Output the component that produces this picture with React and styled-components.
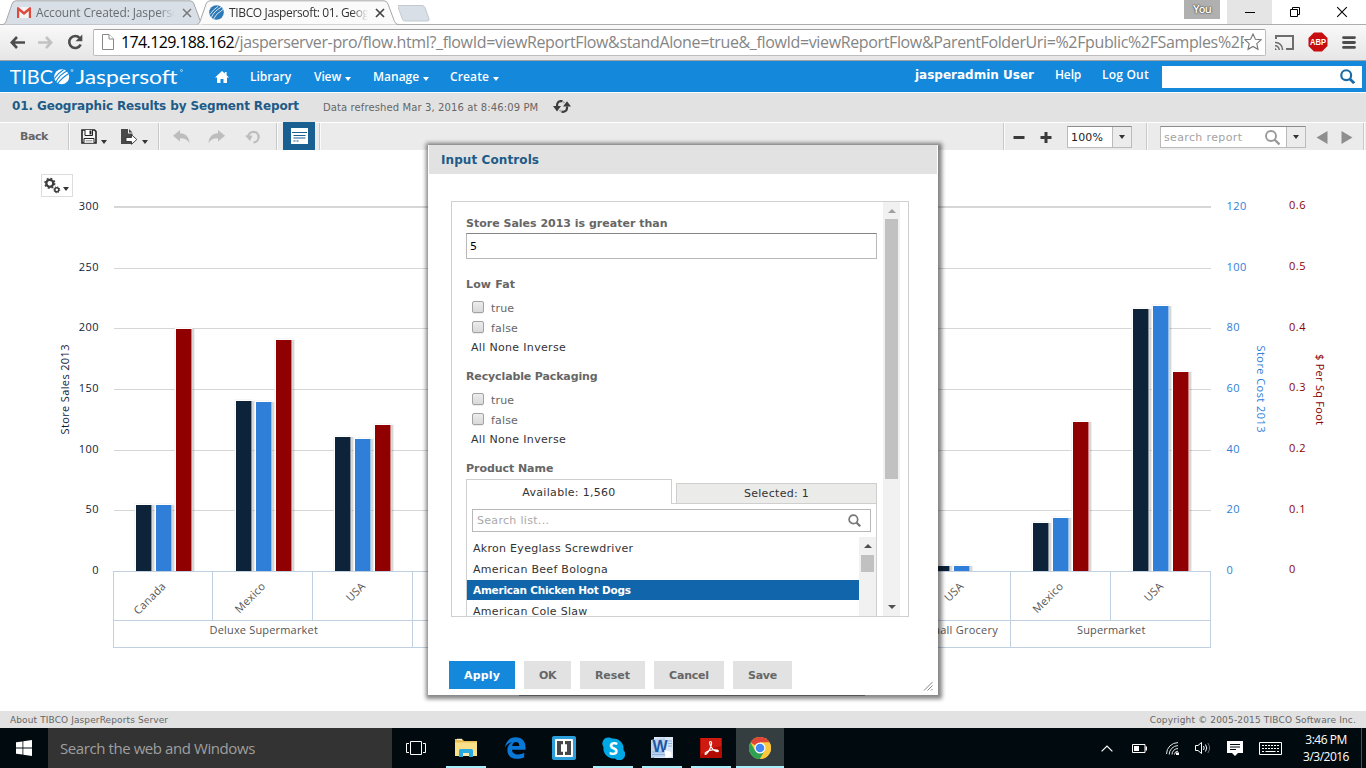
import React from 'react';
import styled, { createGlobalStyle, css } from 'styled-components';

const VERDANA = '"DejaVu Sans", Verdana, sans-serif';
const SEGOE = '"Open Sans", "Segoe UI", sans-serif';

const GlobalStyle = createGlobalStyle`
  *, *::before, *::after { box-sizing: border-box; }
  body { margin: 0; background: #fff; overflow: hidden; }
  svg { display: block; flex: none; }
`;

const Screen = styled.div`
  position: relative;
  width: 1366px;
  height: 768px;
  display: flex;
  flex-direction: column;
  overflow: hidden;
  font-family: ${VERDANA};
  font-size: 11px;
  white-space: nowrap;
  background: #fff;
`;

/* ---------- browser window ---------- */

const TabStrip = styled.div`
  display: flex;
  height: 25px;
  flex: none;
  border-bottom: 1px solid #adadad;
  font-family: ${SEGOE};
  font-size: 12px;
`;

const BrowserTab = styled.div`
  position: relative;
  display: flex;
  align-items: center;
  width: 201px;
  height: 25px;
  margin-left: ${(p) => (p.$active ? -7 : 3)}px;
  padding: 0 0 0 ${(p) => (p.$active ? 12 : 14)}px;
  color: ${(p) => (p.$active ? '#333' : '#6a6d70')};
  letter-spacing: ${(p) => (p.$active ? -0.36 : -0.13)}px;
  z-index: ${(p) => (p.$active ? 2 : 1)};
`;

const TabShape = styled.svg`
  position: absolute;
  left: 0;
  top: 0;
  z-index: -1;
`;

const TabTitle = styled.span`
  width: 139px;
  margin-left: ${(p) => p.$gap}px;
  margin-right: ${(p) => p.$after}px;
  overflow: hidden;
  line-height: 22px;
  mask-image: linear-gradient(to right, #000 88%, transparent 100%);
`;

const WindowControls = styled.div`
  display: flex;
  align-items: flex-start;
  margin-left: auto;
`;

const ProfileBadge = styled.div`
  width: 36px;
  height: 19px;
  margin-right: 7px;
  background: #b0b0b0;
  color: #fff;
  font-size: 11px;
  font-weight: 600;
  line-height: 18px;
  text-align: center;
  letter-spacing: -0.8px;
  text-shadow: 0 0 2px #333, 0 0 1px #444;
`;

const WindowButton = styled.div`
  display: grid;
  place-items: center;
  width: ${(p) => p.$w}px;
  height: 24px;
  background: ${(p) => (p.$hover ? '#e5e5e5' : 'transparent')};
`;

const AddressRow = styled.div`
  display: flex;
  align-items: center;
  height: 36px;
  flex: none;
  padding: 0 10px 1px;
  border-bottom: 1px solid #a2a2a2;
  background: linear-gradient(#f9f9f9, #e6e6e6);
`;

const NavIcons = styled.div`
  display: flex;
  align-items: center;
  gap: 13px;
  width: 84px;
`;

const AddressBox = styled.div`
  display: flex;
  align-items: center;
  width: 1173px;
  height: 27px;
  padding: 0 3px 0 7px;
  border: 1px solid #bdbdbd;
  border-top-color: #a0a0a0;
  border-radius: 2px;
  background: #fff;
  font-family: ${SEGOE};
  font-size: 16px;
  color: #858585;
`;

const Host = styled.span`
  margin-left: 7px;
  color: #000;
  letter-spacing: -0.63px;
`;

const Path = styled.span`
  flex: 1;
  overflow: hidden;
  letter-spacing: -0.365px;
`;

const ExtensionIcons = styled.div`
  display: flex;
  align-items: center;
  gap: 14px;
  margin-left: 9px;
`;

/* ---------- application header ---------- */

const Banner = styled.header`
  display: flex;
  align-items: center;
  height: 31px;
  flex: none;
  padding: 0 4px 0 10px;
  background: #1488da;
  color: #fff;
  font-family: ${SEGOE};
  font-size: 12px;
  font-weight: 600;
`;

const HomeLink = styled.div`
  width: 35px;
  margin-left: 31px;
`;

const NavItem = styled.div`
  display: flex;
  align-items: center;
  width: ${(p) => p.$w}px;
  letter-spacing: ${(p) => p.$track || 0}px;
`;

const Caret = styled.i`
  width: 0;
  height: 0;
  margin: ${(p) => p.$m || '4px 0 0 4px'};
  border: 3px solid transparent;
  border-top: 4px solid currentColor;
  border-bottom: 0;
`;

const UserLinks = styled.div`
  display: flex;
  align-items: baseline;
  margin-left: auto;
  padding-bottom: 4px;
`;

const UserName = styled.b`
  width: 140px;
  font-family: ${VERDANA};
`;

const UserLink = styled.span`
  width: ${(p) => p.$w}px;
  letter-spacing: ${(p) => p.$track}px;
`;

const BannerSearch = styled.div`
  display: flex;
  justify-content: flex-end;
  align-items: center;
  width: 200px;
  height: 22px;
  padding-right: 7px;
  background: #fff;
`;

const TitleBar = styled.div`
  display: flex;
  align-items: center;
  height: 31px;
  flex: none;
  padding-left: 12px;
  border-top: 1px solid #fff;
  border-bottom: 1px solid #fff;
  background: #e2e2e2;
`;

const ReportTitle = styled.h1`
  width: 311px;
  margin: 0;
  padding-bottom: 3px;
  color: #205b87;
  font-size: 12px;
  letter-spacing: -0.125px;
`;

const Refreshed = styled.span`
  width: 230px;
  color: #666;
  font-size: 10px;
  letter-spacing: 0.11px;
`;

const Toolbar = styled.div`
  display: flex;
  height: 27px;
  flex: none;
  background: #ebebeb;
`;

const ToolGroup = styled.div`
  display: flex;
  align-items: center;
  width: ${(p) => p.$w}px;
  padding-left: ${(p) => p.$pl || 0}px;
  gap: ${(p) => p.$gap || 0}px;
  border-right: ${(p) => (p.$last ? '0' : '1px solid #c9c9c9')};
  box-shadow: ${(p) => (p.$last ? 'none' : '1px 0 0 #fafafa')};
`;

const BackLabel = styled.b`
  color: #666;
  letter-spacing: -0.45px;
`;

const MenuTool = styled.div`
  display: flex;
  align-items: center;
  width: 27px;
  color: #333;
`;

const ActiveTool = styled.div`
  display: grid;
  place-items: center;
  width: 32px;
  height: 28px;
  margin-top: -1px;
  background: #1a5f91;
`;

const Spacer = styled.div`
  flex: 1;
`;

const Combo = styled.div`
  display: flex;
  width: ${(p) => p.$w}px;
  height: 22px;
  border: 1px solid #bbb;
  border-top-color: #8c8c8c;
  background: #fff;
  color: ${(p) => p.$color};
  line-height: 22px;
`;

const ComboText = styled.span`
  flex: 1;
  padding-left: 3px;
  letter-spacing: ${(p) => p.$track}px;
`;

const ComboArrow = styled.span`
  display: grid;
  place-items: center;
  width: 19px;
  border-left: 1px solid #bbb;
  background: #ececec;
  color: #333;
`;

const PageArrows = styled.div`
  display: flex;
  gap: 13px;
`;

/* ---------- report and footer ---------- */

const Report = styled.main`
  position: relative;
  height: 561px;
  flex: none;
`;

const ChartMenu = styled.div`
  position: absolute;
  left: 41px;
  top: 24px;
  display: flex;
  align-items: center;
  width: 32px;
  height: 23px;
  padding-left: 2px;
  border: 1px solid #ddd;
  background: #fff;
  color: #333;
`;

const Footer = styled.footer`
  display: flex;
  justify-content: space-between;
  align-items: center;
  height: 17px;
  flex: none;
  padding: 0 10px;
  background: #e2e2e2;
  color: #666;
  font-size: 9px;
`;

const FooterText = styled.span`
  letter-spacing: ${(p) => p.$track}px;
`;

/* ---------- input controls dialog ---------- */

const Dialog = styled.section`
  position: absolute;
  left: 428px;
  top: 145px;
  width: 510px;
  height: 550px;
  padding: 0 1px;
  background: #fff;
  box-shadow: 1px 1px 4px 3px rgba(0, 0, 0, 0.48);
`;

const DialogTitle = styled.h2`
  height: 29px;
  margin: 0;
  padding-left: 12px;
  background: #e2e2e2;
  color: #205b87;
  font-size: 12px;
  line-height: 30px;
  letter-spacing: 0.09px;
`;

const ScrollPanel = styled.div`
  display: flex;
  width: 458px;
  height: 416px;
  margin: 27px 0 0 22px;
  border: 1px solid #d0d0d0;
  overflow: hidden;
`;

const Controls = styled.div`
  width: 431px;
  padding: 14px 6px 0 14px;
  color: #666;
`;

const Control = styled.div`
  height: ${(p) => p.$h}px;
`;

const ControlLabel = styled.div`
  font-weight: 700;
  line-height: 15px;
  letter-spacing: ${(p) => p.$track || 0}px;
`;

const TextInput = styled.div`
  height: 26px;
  margin-top: 2px;
  padding-left: 3px;
  border: 1px solid #b8b8b8;
  border-top-color: #858585;
  color: #000;
  line-height: 26px;
`;

const Choices = styled.div`
  padding: 6px 0 2px 6px;
`;

const Choice = styled.div`
  display: flex;
  align-items: center;
  height: 20px;
  letter-spacing: 0.18px;
`;

const CheckBox = styled.span`
  width: 12px;
  height: 12px;
  margin: -2px 7px 0 0;
  border: 1px solid #a3a3a3;
  border-radius: 2px;
  background: linear-gradient(#ececec, #d9d9d9);
  box-shadow: 0 1px 0 #ececec;
`;

const SelectionLinks = styled.div`
  padding-left: 5px;
  color: #333;
  line-height: 15px;
  letter-spacing: 0.33px;
`;

const PickerTabs = styled.div`
  display: flex;
  align-items: flex-end;
  height: 25px;
  margin-top: 3px;
  color: #333;
  letter-spacing: 0.3px;
  text-align: center;
`;

const PickerTab = styled.div`
  border: 1px solid #cfcfcf;
  ${(p) =>
    p.$active
      ? css`
          width: 206px;
          height: 25px;
          border-bottom: 0;
          line-height: 25px;
        `
      : css`
          width: 201px;
          height: 21px;
          background: #ebebe9;
          line-height: 19px;
        `}
`;

const TabGap = styled.div`
  width: 4px;
  border-bottom: 1px solid #cfcfcf;
`;

const Picker = styled.div`
  height: 140px;
  padding-top: 5px;
  border: 1px solid #cfcfcf;
  border-top: 0;
`;

const ListSearch = styled.div`
  display: flex;
  align-items: center;
  justify-content: space-between;
  height: 23px;
  margin: 0 5px 5px;
  padding: 0 9px 0 4px;
  border: 1px solid #b8b8b8;
  color: #a9a9a9;
  line-height: 22px;
  letter-spacing: 0.31px;
`;

const List = styled.div`
  display: flex;
`;

const Options = styled.div`
  flex: 1;
  padding-top: 1px;
`;

const Option = styled.div`
  height: 20px;
  margin-bottom: 1px;
  padding-left: 6px;
  line-height: 22px;
  color: #333;
  letter-spacing: 0.29px;
  ${(p) =>
    p.$selected &&
    css`
      background: #1065ab;
      color: #fff;
      font-weight: 700;
      font-size: 10.5px;
      line-height: 20px;
      letter-spacing: -0.24px;
    `}
`;

const ScrollTrack = styled.div`
  display: flex;
  flex-direction: column;
  align-items: center;
  width: 17px;
  margin-right: ${(p) => p.$mr || 0}px;
  background: #f1f1f1;
`;

const ScrollArrow = styled.i`
  width: 0;
  height: 0;
  margin: ${(p) => p.$m};
  border: 4px solid transparent;
  ${(p) =>
    p.$down
      ? css`
          border-top-color: ${p.$color};
          border-bottom: 0;
        `
      : css`
          border-bottom-color: ${p.$color};
          border-top: 0;
        `}
`;

const ScrollThumb = styled.div`
  width: 13px;
  height: ${(p) => p.$h}px;
  background: #c1c1c1;
`;

const Actions = styled.div`
  display: flex;
  gap: 9px;
  margin: 44px 0 0 20px;
`;

const Action = styled.div`
  width: ${(p) => p.$w}px;
  height: 28px;
  background: ${(p) => (p.$primary ? '#1488da' : '#e2e2e2')};
  color: ${(p) => (p.$primary ? '#fff' : '#666')};
  font-weight: 700;
  line-height: 29px;
  text-align: center;
  letter-spacing: ${(p) => p.$track}px;
`;

const ResizeGrip = styled.svg`
  position: absolute;
  right: 5px;
  bottom: 4px;
`;

const DialogUnderline = styled.div`
  position: absolute;
  left: 91px;
  bottom: -1px;
  width: 346px;
  height: 1px;
  background: #555;
`;

/* ---------- taskbar ---------- */

const Taskbar = styled.div`
  display: flex;
  height: 40px;
  flex: none;
  background: #010b0f;
  color: #fff;
  font-family: ${SEGOE};
`;

const StartButton = styled.div`
  display: grid;
  place-items: center;
  width: 48px;
`;

const TaskSearch = styled.div`
  width: 344px;
  padding-left: 12px;
  background: #333;
  color: #9f9f9f;
  font-size: 15px;
  line-height: 40px;
  letter-spacing: -0.42px;
`;

const TaskApp = styled.div`
  display: flex;
  flex-direction: column;
  align-items: center;
  justify-content: space-between;
  width: 48px;
  height: 40px;
  margin-right: 1px;
  background: ${(p) => (p.$active ? '#343d40' : 'transparent')};

  &::after {
    content: '';
    width: ${(p) => (p.$active ? 48 : 40)}px;
    height: 2px;
    background: ${(p) => (p.$running ? '#a8effb' : 'transparent')};
  }
`;

const TaskIcon = styled.div`
  display: grid;
  place-items: center;
  height: 38px;
  padding-top: 2px;
`;

const TaskView = styled(StartButton)`
  width: 50px;
  padding-right: 2px;
`;

const Tray = styled.div`
  display: flex;
  align-items: center;
  margin-left: auto;
  border-right: 1px solid #475054;
  margin-right: 4px;
`;

const TrayIcon = styled.div`
  width: ${(p) => p.$w}px;
`;

const SearchGlyph = styled.div`
  width: 21px;
`;

const Clock = styled.div`
  width: 70px;
  margin-bottom: 1px;
  font-size: 12px;
  line-height: 17px;
  text-align: center;
  letter-spacing: -0.5px;
`;

/* ---------- icons ---------- */

const Magnifier = ({ size = 14, color = '#1b6aa5', weight = 2 }) => (
  <svg width={size} height={size} viewBox="0 0 14 14" fill="none" stroke={color} strokeWidth={weight}>
    <circle cx="5.8" cy="5.8" r="4.6" />
    <path d="M9 9.2l4.2 4" strokeWidth={weight + 0.6} />
  </svg>
);

const Logo = () => (
  <svg width="174" height="31" viewBox="0 0 174 31">
    <g fill="#fff" fontFamily="Lato, sans-serif" fontSize="20" fontWeight="400">
      <text x="-0.5" y="22.5" textLength="43.5" lengthAdjust="spacingAndGlyphs">TIBC</text>
      <text x="65.5" y="22.5" textLength="102" lengthAdjust="spacingAndGlyphs">Jaspersoft</text>
    </g>
    <circle cx="51.7" cy="15.7" r="7.5" fill="#fff" />
    <path d="M45.5 21.5Q50 13 58 9.5M47.5 23Q51 17.5 58.8 12.5M44.5 17.5Q48 12 53.5 8.7" fill="none" stroke="#1488da" strokeWidth="1.1" />
    <circle cx="62" cy="9.5" r="1" fill="none" stroke="#fff" strokeWidth=".6" />
    <circle cx="171.5" cy="9.5" r="1" fill="none" stroke="#fff" strokeWidth=".6" />
  </svg>
);

const GmailIcon = () => (
  <svg width="14" height="11" viewBox="0 0 14 11">
    <path d="M1 0h12v11H1z" fill="#f4f4f4" />
    <path d="M0 1.2Q0 0 1.3 0L7 4.8 12.7 0Q14 0 14 1.2V11h-2.2V4L7 8 2.2 4v7H0z" fill="#dd4b3e" />
  </svg>
);

const JasperIcon = () => (
  <svg width="15" height="15" viewBox="0 0 15 15">
    <circle cx="7.5" cy="7.5" r="7.3" fill="#2d79b8" />
    <path d="M2 13Q5 6 12.5 2M4.5 14Q7 8.5 14 4.5M1 9.5Q4 4.5 9 1.5" fill="none" stroke="#fff" strokeWidth=".8" />
  </svg>
);

const Cross = ({ size, color, weight }) => (
  <svg width={size} height={size} viewBox="0 0 10 10">
    <path d="M1 1l8 8M9 1L1 9" stroke={color} strokeWidth={weight} />
  </svg>
);

const BackIcon = ({ color, flip }) => (
  <svg width="15" height="13" viewBox="0 0 15 13">
    <path transform={flip ? 'translate(15 0) scale(-1 1)' : undefined} d="M7 1L1.8 6.5 7 12M2 6.5h13" fill="none" stroke={color} strokeWidth="2.6" />
  </svg>
);

const ReloadIcon = () => (
  <svg width="17" height="16" viewBox="-1 0 17 16">
    <path d="M12.7 4A6 6 0 1 0 13.7 10.5" fill="none" stroke="#4d4d4d" strokeWidth="2.6" />
    <path d="M15.3.5v6.8H8.5z" fill="#4d4d4d" />
  </svg>
);

const PageIcon = () => (
  <svg width="13" height="16" viewBox="-1 0 13 16" fill="#fff" stroke="#888">
    <path d="M.5.5h6.5l4.5 4.5v10.5H.5z" />
    <path d="M7 .5V5h4.5" />
  </svg>
);

const StarIcon = () => (
  <svg width="18" height="18" viewBox="0 0 18 18">
    <path d="M9 1l2.4 5.2 5.6.6-4.2 3.8 1.2 5.7L9 13.4l-5 2.9 1.2-5.7L1 6.8l5.6-.6z" fill="#fff" stroke="#777" strokeWidth="1.1" />
  </svg>
);

const CastIcon = () => (
  <svg width="19" height="15" viewBox="0 0 19 15" fill="none" stroke="#6d6d6d" strokeWidth="2">
    <path d="M1 4V1h17v13h-7" />
    <path d="M0 7.5A7 7 0 0 1 7.5 15M0 10.8A4 4 0 0 1 4.2 15" strokeWidth="1.5" />
    <path d="M0 12.8L2.2 15H0z" fill="#6d6d6d" stroke="none" />
  </svg>
);

const AbpIcon = () => (
  <svg width="20" height="20" viewBox="0 0 20 20">
    <path d="M6 .5h8L19.5 6v8L14 19.5H6L.5 14V6z" fill="#c70d0d" />
    <text x="10" y="13.2" fill="#fff" fontFamily="Liberation Sans, sans-serif" fontSize="9" fontWeight="700" textAnchor="middle" textLength="16" lengthAdjust="spacingAndGlyphs">ABP</text>
  </svg>
);

const MenuIcon = () => (
  <svg width="14" height="13" viewBox="0 0 14 13">
    <path d="M1.5 1.6h11M1.5 6.5h11M1.5 11.4h11" stroke="#4d4d4d" strokeWidth="2.8" strokeLinecap="round" />
  </svg>
);

const HomeIcon = () => (
  <svg width="14" height="12" viewBox="0 0 14 12" fill="#fff">
    <path d="M7 0l2.8 2.6V1h1.8v3.3L14 6.6h-2V12H8.5V8h-3v4H2V6.6H0z" />
  </svg>
);

const RefreshIcon = () => (
  <svg width="18" height="16" viewBox="0 0 18 16">
    <path d="M9.5 1.2Q3.8.2 4 6.5M8.5 11.7Q14.5 12.5 14 6.5" fill="none" stroke="#3c3c3c" strokeWidth="2.2" />
    <path d="M0 6h8L4 11.5zM10 6.5h8L14 1.2z" fill="#3c3c3c" />
    <path d="M9.5.4l3 2-2.5 1zM8.5 12.6l-3-2 2.5-1z" fill="#aaa" />
  </svg>
);

const SaveIcon = () => (
  <svg width="16" height="15" viewBox="0 0 16 15">
    <path d="M1 1h12.5L15 2.5V14H1z" fill="#f2f2f2" stroke="#222" strokeWidth="1.6" />
    <path d="M4 1v5.5h7.5V1M3 14V9.5h10V14" fill="#fff" stroke="#222" />
    <path d="M8.5 1.5h2v4h-2z" fill="#222" />
    <path d="M4.5 11.5h7M4.5 13h7" stroke="#999" strokeWidth=".8" />
  </svg>
);

const ExportIcon = () => (
  <svg width="17" height="16" viewBox="0 0 17 16">
    <path d="M0 0h7v4.5h4.5V15H0z" fill="#484848" />
    <path d="M8 0l3.5 3.6H8z" fill="#484848" />
    <path d="M5 8.5h5.5V5.8l5.3 4.7-5.3 4.8v-2.8H5z" fill="#fff" stroke="#333" strokeWidth=".9" />
  </svg>
);

const UndoIcon = ({ flip }) => (
  <svg width="17" height="14" viewBox="0 0 17 14">
    <path transform={flip ? 'translate(17 0) scale(-1 1)' : undefined} d="M7 0v3.3c5.5 0 9 3.5 9.5 9.7C14.5 9.5 11.5 8 7 8.2v3.3L0 5.7z" fill="#bdbdbd" />
  </svg>
);

const UndoAllIcon = () => (
  <svg width="17" height="14" viewBox="-2 0 17 14">
    <path d="M3.2 7A5.2 5.2 0 1 1 8.5 12.3" fill="none" stroke="#bdbdbd" strokeWidth="2.3" />
    <path d="M0 5.5h7.5L5 11z" fill="#bdbdbd" />
  </svg>
);

const ControlsIcon = () => (
  <svg width="17" height="16" viewBox="0 0 17 16">
    <path d="M0 0h17v16H0z" fill="#fff" />
    <path d="M1 4.5h15M2.5 7.5h12M2.5 10h12M2.5 13h2M5.5 13h2" stroke="#1a5f91" strokeWidth="1.2" />
  </svg>
);

const ZoomGlyph = ({ plus }) => (
  <svg width="12" height="14" viewBox="0 -1 12 14">
    <path d={plus ? 'M.5 6.5h11M6 1v11' : 'M.5 6.5h11'} stroke="#3a3a3a" strokeWidth="3" />
  </svg>
);

const PageArrow = ({ next }) => (
  <svg width="12" height="14" viewBox="0 -1 12 14">
    <path d={next ? 'M.5 0v13l11-6.5z' : 'M11.5 0v13L.5 6.5z'} fill="#8e8e8e" />
  </svg>
);

const GearsIcon = () => (
  <svg width="17" height="17" viewBox="0 0 17 17" fill="none" stroke="#3d3d3d">
    <circle cx="5.8" cy="6.3" r="3.5" strokeWidth="2.3" />
    <circle cx="5.8" cy="6.3" r="4.9" strokeWidth="1.5" strokeDasharray="1.9 1.95" />
    <circle cx="12.8" cy="12.8" r="2" strokeWidth="1.6" />
    <circle cx="12.8" cy="12.8" r="3" strokeWidth="1" strokeDasharray="1.2 1.15" />
  </svg>
);

/* ---------- chart ---------- */

const INK = '#0d233a';
const BLUE = '#2f7ed8';
const RED = '#910000';

const clusters = [
  { x: 136, tops: [505, 505, 329], label: 'Canada', lx: 166.5 },
  { x: 236, tops: [401, 402, 340], label: 'Mexico', lx: 266.2 },
  { x: 335, tops: [437, 439, 425], label: 'USA', lx: 366 },
  { x: 934, tops: [566, 566], label: 'USA', lx: 964.3 },
  { x: 1033, tops: [523, 518, 422], label: 'Mexico', lx: 1064 },
  { x: 1133, tops: [309, 306, 372], label: 'USA', lx: 1164 },
];

const axisRows = [
  ['300', '120', '0.6', 207],
  ['250', '100', '0.5', 268.5],
  ['200', '80', '0.4', 328.5],
  ['150', '60', '0.3', 389.5],
  ['100', '40', '0.2', 450.5],
  ['50', '20', '0.1', 510.5],
  ['0', '0', '0', 571.5],
];

const Bar = ({ x, top, fill }) => {
  const h = 571 - top;
  return (
    <g>
      <path d={`M${x + 17} ${top}V571`} stroke="#000" strokeOpacity=".13" strokeWidth="3" />
      <path d={`M${x + 16.5} ${top}V571`} stroke="#000" strokeOpacity=".12" strokeWidth="1.5" />
      <rect x={x - 1.5} y={top - 1.5} width="18" height={h + 1.5} fill="#eee" />
      <rect x={x - 1} y={top - 1} width="17" height={h + 1} fill="#fff" />
      <rect x={x} y={top} width="15.5" height={h} fill={fill} />
    </g>
  );
};

const Chart = () => (
  <svg width="1366" height="561" viewBox="0 150 1366 561" fontFamily={SEGOE} fontSize="11">
    {axisRows.slice(0, 6).map(([label, , , y]) => (
      <path key={label} d={`M114 ${y}H1211`} stroke="#d6d6d6" strokeWidth={label === '300' ? 2 : 1} />
    ))}
    {clusters.map((c) =>
      c.tops.map((top, i) => <Bar key={`${c.x}-${i}`} x={c.x + i * 20} top={top} fill={[INK, BLUE, RED][i]} />)
    )}
    <g fill="none" stroke="#c0d0e0">
      <path d="M113 571.5H1211M113 620.5H1211M113 647.5H1211" />
      <path d="M113.5 571V648M412.5 571V648M1010.5 571V648M1210.5 571V648" />
      <path d="M212.5 571V620M312.5 571V620M1110.5 571V620" />
    </g>
    <g fill="#555" letterSpacing=".2">
      {clusters.map((c) => (
        <text key={c.x} textAnchor="end" transform={`translate(${c.lx} 587) rotate(-45)`}>{c.label}</text>
      ))}
      <text x="209.5" y="634" textLength="108.5">Deluxe Supermarket</text>
      <text x="923.5" y="634" textLength="74.5">Small Grocery</text>
      <text x="1077" y="634" textLength="68.5">Supermarket</text>
    </g>
    {axisRows.map(([a, b, c], i) => {
      const y = 210 + i * 60.67;
      return (
        <g key={i} letterSpacing=".5">
          <text x="99" y={y} textAnchor="end" fill={INK}>{a}</text>
          <text x="1226.5" y={y} fill={BLUE}>{b}</text>
          <text x="1289" y={y - 0.7} fill="#8b0000">{c}</text>
        </g>
      );
    })}
    <text transform="translate(68.5 434.5) rotate(-90)" textLength="90" fill={INK}>Store Sales 2013</text>
    <text transform="translate(1256.5 345.500) rotate(90)" textLength="87" fill={BLUE}>Store Cost 2013</text>
    <text transform="translate(1316 354) rotate(90)" textLength="71" fill="#8b0000">$ Per Sq Foot</text>
  </svg>
);

/* ---------- taskbar icons ---------- */

const WindowsLogo = () => (
  <svg width="16" height="16" viewBox="0 0 16 16" fill="#fff">
    <path d="M0 2.3L6.5 1.4v6.2H0zM7.3 1.3L16 0v7.6H7.3zM0 8.4h6.5v6.2L0 13.7zM7.3 8.4H16V16l-8.7-1.3z" />
  </svg>
);

const TaskViewIcon = () => (
  <svg width="20" height="14" viewBox="0 0 20 14" fill="none" stroke="#fff">
    <path d="M4.5.5h11v13h-11zM3 2.5H.5v9H3M17 2.5h2.5v9H17" />
  </svg>
);

const ExplorerIcon = () => (
  <svg width="22" height="20" viewBox="0 0 22 20">
    <path d="M0 1h7l2 2h13v15H0z" fill="#e8c057" />
    <path d="M0 4.5h22V18H0z" fill="#fbe08a" />
    <path d="M2 1.3h5" stroke="#fff" />
    <path d="M4 19v-6.5Q4 11 5.5 11h11q1.5 0 1.5 1.5V19h-4v-4H8v4z" fill="#29abe2" />
    <path d="M8 15h6v3H8z" fill="#fbe9ad" />
  </svg>
);

const EdgeIcon = () => (
  <svg width="21" height="22" viewBox="0 0 21 22">
    <path d="M0 10.5C.8 4.2 5 .3 10.8.3c6 0 9.7 4.2 9.7 9.7v2.7H7c.2 3.3 2.8 4.7 6 4.7 2.5 0 4.4-.6 6.2-1.7v4.5c-2 1.1-4.3 1.6-7.2 1.6-6 0-9.6-3.5-9.6-8.8 0-3.6 2-6.4 5-7.8C4.3 5.5 1.7 7 0 10.5zM7.2 9h7.1c0-2.6-1-4-3.3-4-2.1 0-3.5 1.5-3.8 4z" fill="#0a78d7" />
  </svg>
);

const BracketsIcon = () => (
  <svg width="24" height="24" viewBox="0 0 24 24">
    <rect width="24" height="24" rx="2" fill="#2c9fda" />
    <rect x="3" y="3" width="18" height="18" rx="1" fill="#fff" />
    <path d="M5 5h6v3.2H9v7.600h2V19H5zM19 5h-6v3.2h2v7.600h-2V19h6z" fill="#474747" />
  </svg>
);

const SkypeIcon = () => (
  <svg width="23" height="23" viewBox="0 0 23 23">
    <path d="M6.5.5A6 6 0 0 1 10 1.5 10.200 10.200 0 0 1 21.500 13 6 6 0 0 1 13 21.500 10.200 10.200 0 0 1 1.500 10 6 6 0 0 1 6.500.5z" fill="#00a7e5" />
    <text x="11.5" y="17.5" textAnchor="middle" fontFamily="Open Sans, sans-serif" fontWeight="700" fontSize="17" fill="#fff">S</text>
  </svg>
);

const WordIcon = () => (
  <svg width="22" height="22" viewBox="0 0 22 22">
    <path d="M3 0h19v21H3z" fill="#dce8f6" />
    <path d="M0 3l14-2.5v19L0 21z" fill="#bdd4ef" />
    <path d="M1 15h13M1 17.500h18M17 4h4M17 6.500h4M17 9h4" stroke="#8cb0dc" />
    <text x="9" y="14.500" textAnchor="middle" fontFamily="Liberation Sans, sans-serif" fontWeight="700" fontSize="16" fill="#1e57a5">W</text>
    <path d="M13 13l7 2 1 4-6 2z" fill="#fff" />
  </svg>
);

const AcrobatIcon = () => (
  <svg width="22" height="20" viewBox="0 0 22 20">
    <path d="M0 0h22v20H0z" fill="#b30b00" />
    <path d="M1 0h20v8Q10 10 1 17z" fill="#cf1a12" />
    <path d="M10.5 3.5c-1.500 0-1 3 1 6s5 4.500 6.500 4c1.500-1-2-2-5.500-1.600S4.500 14.500 5 16s4-2.500 5.500-6.500 1.500-6 0-6z" fill="none" stroke="#fff" strokeWidth="1.2" />
  </svg>
);

const ChromeIcon = () => (
  <svg width="22" height="22" viewBox="0 0 22 22">
    <circle cx="11" cy="11" r="11" fill="#fbc83c" />
    <path d="M11 11L1.470 5.500A11 11 0 0 1 20.530 5.500H11z" fill="#e0453a" />
    <path d="M11 11L6.240 13.700 1.470 5.500A11 11 0 0 0 11 22l4.760-8.250z" fill="#2fa152" />
    <path d="M11 5.500h9.530A11 11 0 0 1 11 22l4.760-8.250z" fill="#fbc83c" />
    <circle cx="11" cy="11" r="5.500" fill="#fff" />
    <circle cx="11" cy="11" r="4.300" fill="#4285f4" />
  </svg>
);

const ChevronUp = () => (
  <svg width="12" height="7" viewBox="0 0 12 7"><path d="M.6 6.400L6 1l5.400 5.400" fill="none" stroke="#fff" strokeWidth="1.2" /></svg>
);

const BatteryIcon = () => (
  <svg width="15" height="9" viewBox="0 0 15 9">
    <path d="M.5.5h12.500v8H.5z" fill="none" stroke="#fff" />
    <path d="M2 2h5v5H2zM13.500 2.500H15v4h-1.500z" fill="#fff" />
  </svg>
);

const WifiIcon = () => (
  <svg width="13" height="13" viewBox="0 0 13 13" fill="none" stroke="#e6e6e6">
    <path d="M.5 12A11.500 11.500 0 0 1 12 .6M3.200 12.500A9 9 0 0 1 12 3.600M6 12.500a6 6 0 0 1 6-6M8.500 12.500A3.500 3.500 0 0 1 12 9.200" />
    <path d="M10 10.500h3V13h-3z" fill="#fff" stroke="none" />
  </svg>
);

const SpeakerIcon = () => (
  <svg width="16" height="14" viewBox="0 0 16 14" fill="none" stroke="#fff">
    <path d="M.5 4.500H3L6.500 1.500v11L3 9.500H.5z" />
    <path d="M8.500 5q1.400 2 0 4M10.500 3.500q2.500 3.500 0 7" />
    <path d="M12.800 2q3.600 5 0 10" stroke="#69757a" />
  </svg>
);

const MessageIcon = () => (
  <svg width="16" height="15" viewBox="0 0 16 15">
    <path d="M0 0h16v12h-5L8 15l-3-3H0z" fill="#fff" />
    <path d="M3 3.500h10M3 6h10M3 8.500h6" stroke="#010b0f" strokeWidth="1.2" />
  </svg>
);

const KeyboardIcon = () => (
  <svg width="23" height="13" viewBox="0 0 23 13" fill="none" stroke="#fff">
    <path d="M.5.5h22v12H.5z" />
    <path d="M3 3.500h17M3 6.500h17" strokeDasharray="2 1" />
    <path d="M3 9.500h2M6.500 9.500h10M18 9.500h2" />
  </svg>
);

const taskApps = [
  { id: 'explorer', Icon: ExplorerIcon, running: true },
  { id: 'edge', Icon: EdgeIcon },
  { id: 'brackets', Icon: BracketsIcon },
  { id: 'skype', Icon: SkypeIcon, running: true },
  { id: 'word', Icon: WordIcon, running: true },
  { id: 'acrobat', Icon: AcrobatIcon, running: true },
  { id: 'chrome', Icon: ChromeIcon, running: true, active: true },
];

const TabOutline = ({ fill }) => (
  <TabShape width="201" height="25" viewBox="0 0 201 25">
    <path d="M0 24.500Q2 24 3 21.500L9 4Q10 .8 13 .8H187Q190 .8 191 4L197.500 21.500Q198.500 24 201 24.500" fill={fill} stroke="#a8a8a8" />
  </TabShape>
);

const NewTabShape = () => (
  <svg width="36" height="25" viewBox="2 0 36 25">
    <path d="M1.500 5.500H26Q28 5.500 29 7.500L33 19Q33.500 21 31.500 21H9Q7 21 6.300 19z" fill="#d8dfe7" stroke="#c3c9cf" />
  </svg>
);

const BooleanControl = ({ label, track }) => (
  <Control $h={92}>
    <ControlLabel $track={track}>{label}</ControlLabel>
    <Choices>
      <Choice><CheckBox />true</Choice>
      <Choice><CheckBox />false</Choice>
    </Choices>
    <SelectionLinks>All None Inverse</SelectionLinks>
  </Control>
);

const InputControlsDialog = () => (
  <Dialog>
    <DialogTitle>Input Controls</DialogTitle>
    <ScrollPanel>
      <Controls>
        <Control $h={61}>
          <ControlLabel>Store Sales 2013 is greater than</ControlLabel>
          <TextInput>5</TextInput>
        </Control>
        <BooleanControl label="Low Fat" track={0.15} />
        <BooleanControl label="Recyclable Packaging" track={-0.13} />
        <ControlLabel $track={-0.05}>Product Name</ControlLabel>
        <PickerTabs>
          <PickerTab $active>Available: 1,560</PickerTab>
          <TabGap />
          <PickerTab>Selected: 1</PickerTab>
        </PickerTabs>
        <Picker>
          <ListSearch>
            Search list...
            <Magnifier size={13} color="#777" weight={1.8} />
          </ListSearch>
          <List>
            <Options>
              <Option>Akron Eyeglass Screwdriver</Option>
              <Option>American Beef Bologna</Option>
              <Option $selected>American Chicken Hot Dogs</Option>
              <Option>American Cole Slaw</Option>
            </Options>
            <ScrollTrack>
              <ScrollArrow $m="7px 0" $color="#505050" />
              <ScrollThumb $h={17} />
            </ScrollTrack>
          </List>
        </Picker>
      </Controls>
      <ScrollTrack $mr={8}>
        <ScrollArrow $m="7px 0 6px" $color="#a0a0a0" />
        <ScrollThumb $h={260} />
        <Spacer />
        <ScrollArrow $m="0 0 7px" $down $color="#505050" />
      </ScrollTrack>
    </ScrollPanel>
    <Actions>
      <Action $w={66} $primary $track={0.15}>Apply</Action>
      <Action $w={47} $track={-0.4}>OK</Action>
      <Action $w={65} $track={0}>Reset</Action>
      <Action $w={70} $track={-0.2}>Cancel</Action>
      <Action $w={59} $track={-0.25}>Save</Action>
    </Actions>
    <DialogUnderline />
    <ResizeGrip width="10" height="10" viewBox="0 0 10 10">
      <path d="M1 9.500L9.500 1M4.500 9.500l5-5M8 9.500L9.500 8" stroke="#777" fill="none" strokeWidth=".9" />
    </ResizeGrip>
  </Dialog>
);

export default function App() {
  return (
    <Screen>
      <GlobalStyle />
      <TabStrip>
        <BrowserTab>
          <TabOutline fill="#d8dfe7" />
          <GmailIcon />
          <TabTitle $gap={5} $after={7}>Account Created: Jasperso</TabTitle>
          <Cross size={10} color="#777" weight={1.5} />
        </BrowserTab>
        <BrowserTab $active>
          <TabOutline fill="#fafafa" />
          <JasperIcon />
          <TabTitle $gap={5} $after={7}>TIBCO Jaspersoft: 01. Geog</TabTitle>
          <Cross size={10} color="#444" weight={1.7} />
        </BrowserTab>
        <NewTabShape />
        <WindowControls>
          <ProfileBadge>You</ProfileBadge>
          <WindowButton $w={45} $hover>
            <svg width="10" height="10" viewBox="0 0 10 10"><path d="M0 5.500h10" stroke="#000" /></svg>
          </WindowButton>
          <WindowButton $w={46}>
            <svg width="10" height="10" viewBox="0 0 10 10" fill="none" stroke="#000"><path d="M.5 2.500h7v7h-7zM2.500 2.500v-2h7v7h-2" /></svg>
          </WindowButton>
          <WindowButton $w={48}><Cross size={12} color="#000" weight={0.9} /></WindowButton>
        </WindowControls>
      </TabStrip>
      <AddressRow>
        <NavIcons>
          <BackIcon color="#4d4d4d" />
          <BackIcon color="#c2c2c2" flip />
          <ReloadIcon />
        </NavIcons>
        <AddressBox>
          <PageIcon />
          <Host>174.129.188.162</Host>
          <Path>/jasperserver-pro/flow.html?_flowId=viewReportFlow&amp;standAlone=true&amp;_flowId=viewReportFlow&amp;ParentFolderUri=%2Fpublic%2FSamples%2F</Path>
          <StarIcon />
        </AddressBox>
        <ExtensionIcons>
          <CastIcon />
          <AbpIcon />
          <MenuIcon />
        </ExtensionIcons>
      </AddressRow>

      <Banner>
        <Logo />
        <HomeLink><HomeIcon /></HomeLink>
        <NavItem $w={64}>Library</NavItem>
        <NavItem $w={59} $track={-0.1}>View<Caret /></NavItem>
        <NavItem $w={77}>Manage<Caret /></NavItem>
        <NavItem $w={60} $track={0.13}>Create<Caret /></NavItem>
        <UserLinks>
          <UserName>jasperadmin User</UserName>
          <UserLink $w={47} $track={-0.15}>Help</UserLink>
          <UserLink $w={60} $track={0.2}>Log Out</UserLink>
        </UserLinks>
        <BannerSearch><Magnifier size={15} /></BannerSearch>
      </Banner>

      <TitleBar>
        <ReportTitle>01. Geographic Results by Segment Report</ReportTitle>
        <Refreshed>Data refreshed Mar 3, 2016 at 8:46:09 PM</Refreshed>
        <RefreshIcon />
      </TitleBar>

      <Toolbar>
        <ToolGroup $w={69} $pl={20}><BackLabel>Back</BackLabel></ToolGroup>
        <ToolGroup $w={90} $pl={12} $gap={13}>
          <MenuTool><SaveIcon /><Caret $m="10px 0 0 4px" /></MenuTool>
          <MenuTool><ExportIcon /><Caret $m="10px 0 0 4px" /></MenuTool>
        </ToolGroup>
        <ToolGroup $w={118} $pl={14} $gap={18}>
          <UndoIcon />
          <UndoIcon flip />
          <UndoAllIcon />
        </ToolGroup>
        <ToolGroup $w={43} $pl={6}><ActiveTool><ControlsIcon /></ActiveTool></ToolGroup>
        <Spacer />
        <ToolGroup $w={1} />
        <ToolGroup $w={143} $pl={9} $gap={15}>
          <ZoomGlyph />
          <ZoomGlyph plus />
          <Combo $w={65} $color="#222">
            <ComboText $track={0.18}>100%</ComboText>
            <ComboArrow><Caret $m="0" /></ComboArrow>
          </Combo>
        </ToolGroup>
        <ToolGroup $w={217} $pl={13} $gap={10}>
          <Combo $w={146} $color="#a3a3a3">
            <ComboText $track={0.36}>search report</ComboText>
            <SearchGlyph>
              <svg width="15" height="20" viewBox="0 -3 15 20" fill="none" stroke="#999" strokeWidth="1.9">
                <circle cx="6" cy="6" r="5" />
                <path d="M9.5 9.5l5 5" strokeWidth="2.4" />
              </svg>
            </SearchGlyph>
            <ComboArrow><Caret $m="0" /></ComboArrow>
          </Combo>
          <PageArrows>
            <PageArrow />
            <PageArrow next />
          </PageArrows>
        </ToolGroup>
        <ToolGroup $w={2} $last />
      </Toolbar>

      <Report>
        <Chart />
        <ChartMenu><GearsIcon /><Caret $m="6px 0 0 2px" /></ChartMenu>
      </Report>

      <Footer>
        <FooterText $track={0.11}>About TIBCO JasperReports Server</FooterText>
        <FooterText $track={0.16}>Copyright © 2005-2015 TIBCO Software Inc.</FooterText>
      </Footer>

      <Taskbar>
        <StartButton><WindowsLogo /></StartButton>
        <TaskSearch>Search the web and Windows</TaskSearch>
        <TaskView><TaskViewIcon /></TaskView>
        {taskApps.map(({ id, Icon, running, active }) => (
          <TaskApp key={id} $running={running} $active={active}>
            <TaskIcon><Icon /></TaskIcon>
          </TaskApp>
        ))}
        <Tray>
          <TrayIcon $w={31}><ChevronUp /></TrayIcon>
          <TrayIcon $w={34}><BatteryIcon /></TrayIcon>
          <TrayIcon $w={29}><WifiIcon /></TrayIcon>
          <TrayIcon $w={32}><SpeakerIcon /></TrayIcon>
          <TrayIcon $w={32}><MessageIcon /></TrayIcon>
          <TrayIcon $w={32}><KeyboardIcon /></TrayIcon>
          <Clock>3:46 PM<br />3/3/2016</Clock>
        </Tray>
      </Taskbar>

      <InputControlsDialog />
    </Screen>
  );
}
